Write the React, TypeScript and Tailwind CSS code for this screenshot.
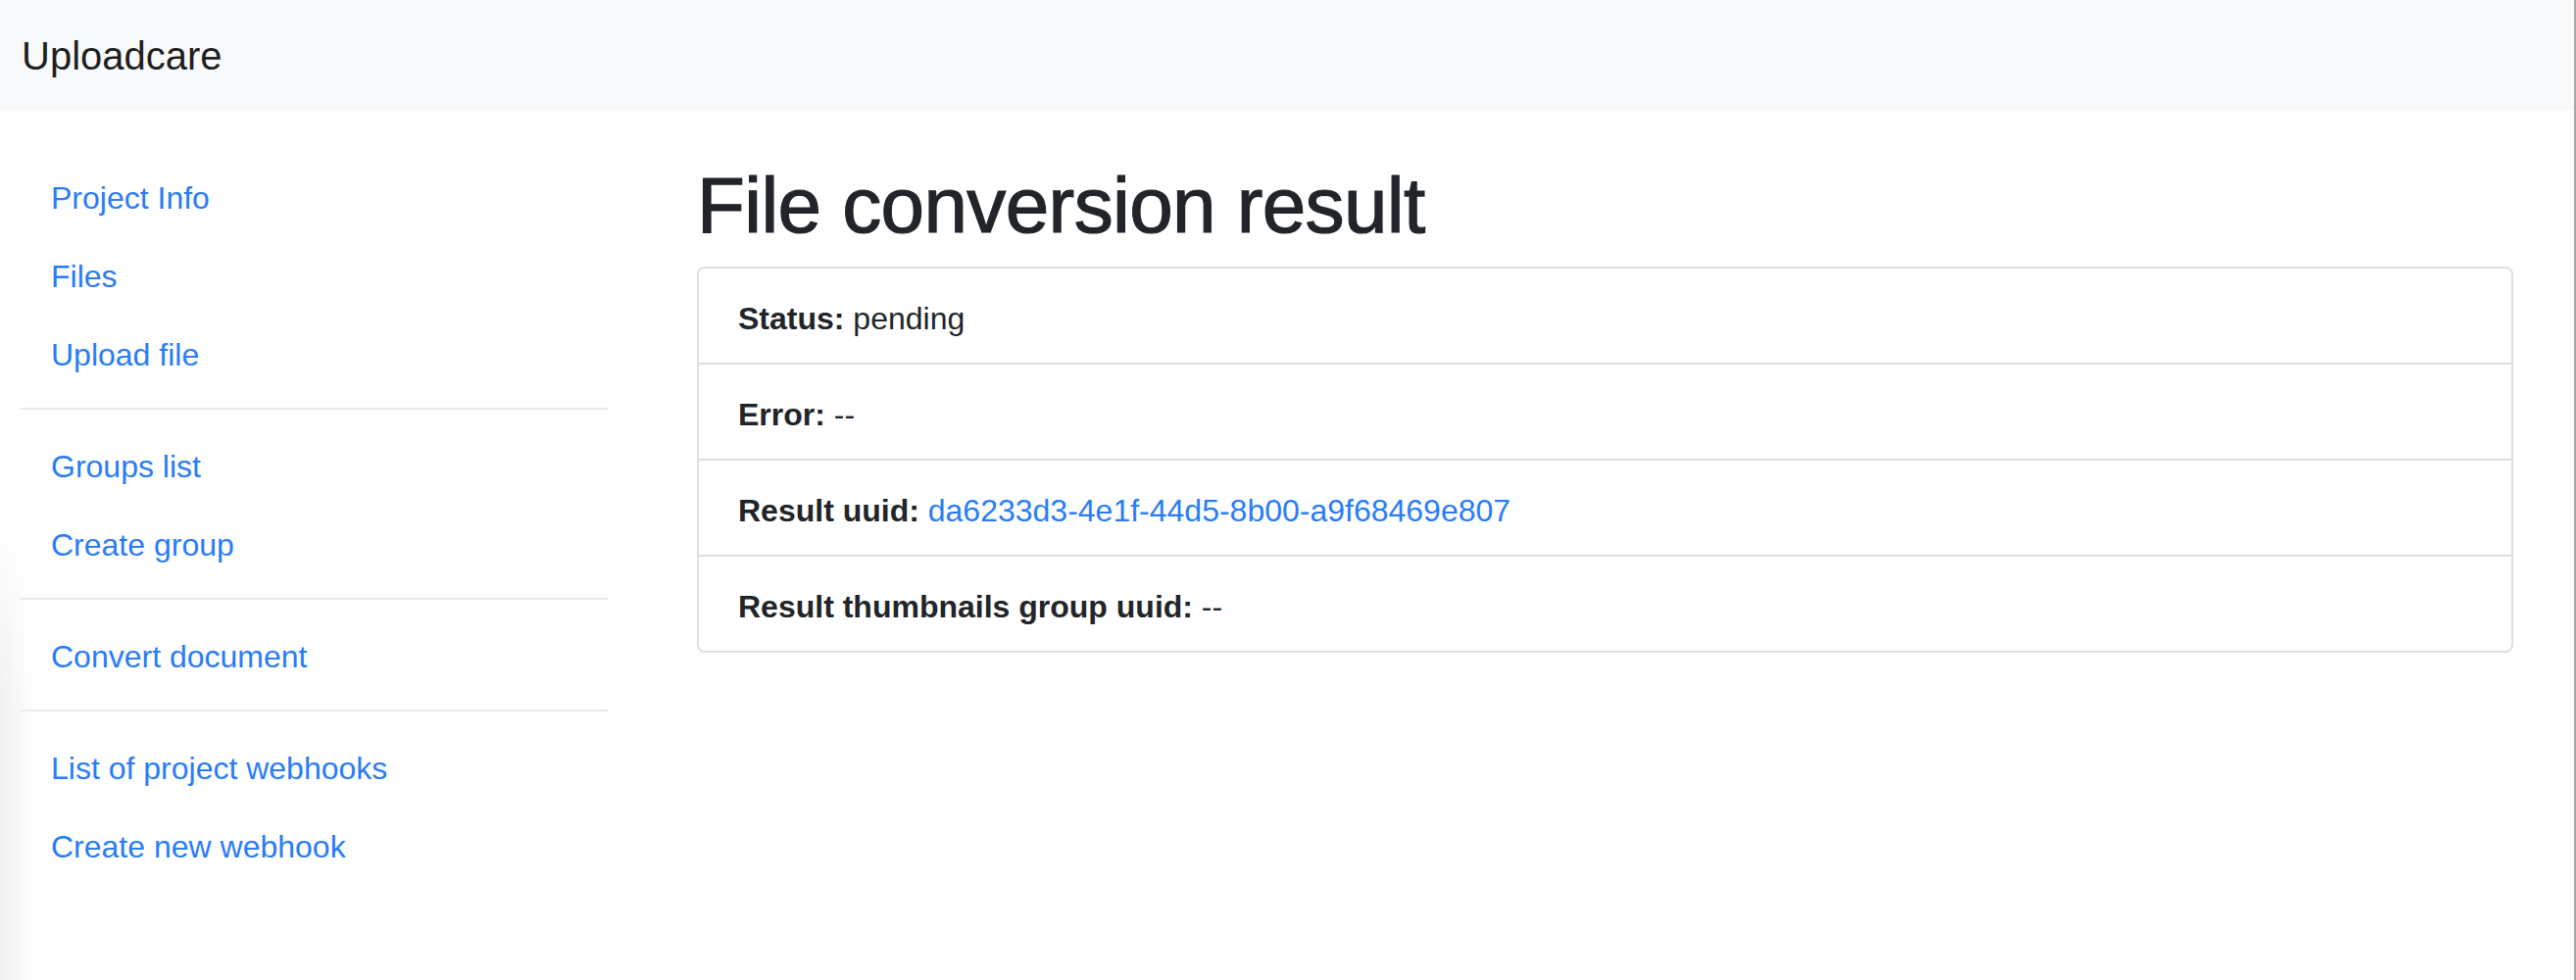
import React from "react";

const linkGroups = [
  ["Project Info", "Files", "Upload file"],
  ["Groups list", "Create group"],
  ["Convert document"],
  ["List of project webhooks", "Create new webhook"],
];

const rows: { label: string; value: string; link?: boolean }[] = [
  { label: "Status:", value: "pending" },
  { label: "Error:", value: "--" },
  { label: "Result uuid:", value: "da6233d3-4e1f-44d5-8b00-a9f68469e807", link: true },
  { label: "Result thumbnails group uuid:", value: "--" },
];

export default function App() {
  return (
    <div className="relative min-h-screen overflow-hidden bg-white font-['Liberation_Sans',Arial,sans-serif] text-[#212529]">
      <header className="flex h-[112px] items-center bg-[#f8f9fa] pl-[22px] pt-[2px]">
        <span className="text-[40px] leading-[60px] text-black/90">Uploadcare</span>
      </header>

      <div className="flex pt-[48px]">
        <aside className="ml-[20px] flex w-[600px] shrink-0 flex-col">
          {linkGroups.map((group, gi) => (
            <React.Fragment key={gi}>
              {gi > 0 && <hr className="my-[16px] border-0 border-t-2 border-[#e9e9ee]" />}
              {group.map((label) => (
                <a key={label} href="#" className="block px-[32px] pb-[14px] pt-[18px] text-[32px] leading-[48px] text-[#2a7cf6]">
                  {label}
                </a>
              ))}
            </React.Fragment>
          ))}
        </aside>

        <main className="ml-[91px] w-[1853px] shrink-0">
          <h1 className="mb-[16px] pt-[3px] pb-[-3px] text-[80px] leading-[93px] tracking-[-0.6px] text-[#212529] [-webkit-text-stroke:1.2px_#212529]">
            File conversion result
          </h1>
          <div className="rounded-[8px] border-2 border-[#dfdfdf]">
            {rows.map((row, i) => (
              <div
                key={row.label}
                className={`px-[40px] pb-[21px] pt-[27px] text-[32px] leading-[48px] ${i > 0 ? "border-t-2 border-[#dfdfdf]" : ""}`}
              >
                <b className="font-bold">{row.label}</b>{" "}
                {row.link ? (
                  <a href="#" className="text-[#2a7cf6]">
                    {row.value}
                  </a>
                ) : (
                  <span>{row.value}</span>
                )}
              </div>
            ))}
          </div>
        </main>
      </div>

      {/* window shadow on the left edge */}
      <div className="pointer-events-none absolute bottom-0 left-0 top-[520px] w-[36px] bg-gradient-to-r from-[#f0f0f0] to-transparent [mask-image:linear-gradient(to_bottom,transparent,black_200px)]" />
      {/* window edge on the right */}
      <div className="pointer-events-none absolute bottom-0 right-0 top-0 w-[2px] bg-[#a8a8a8]" />
    </div>
  );
}
